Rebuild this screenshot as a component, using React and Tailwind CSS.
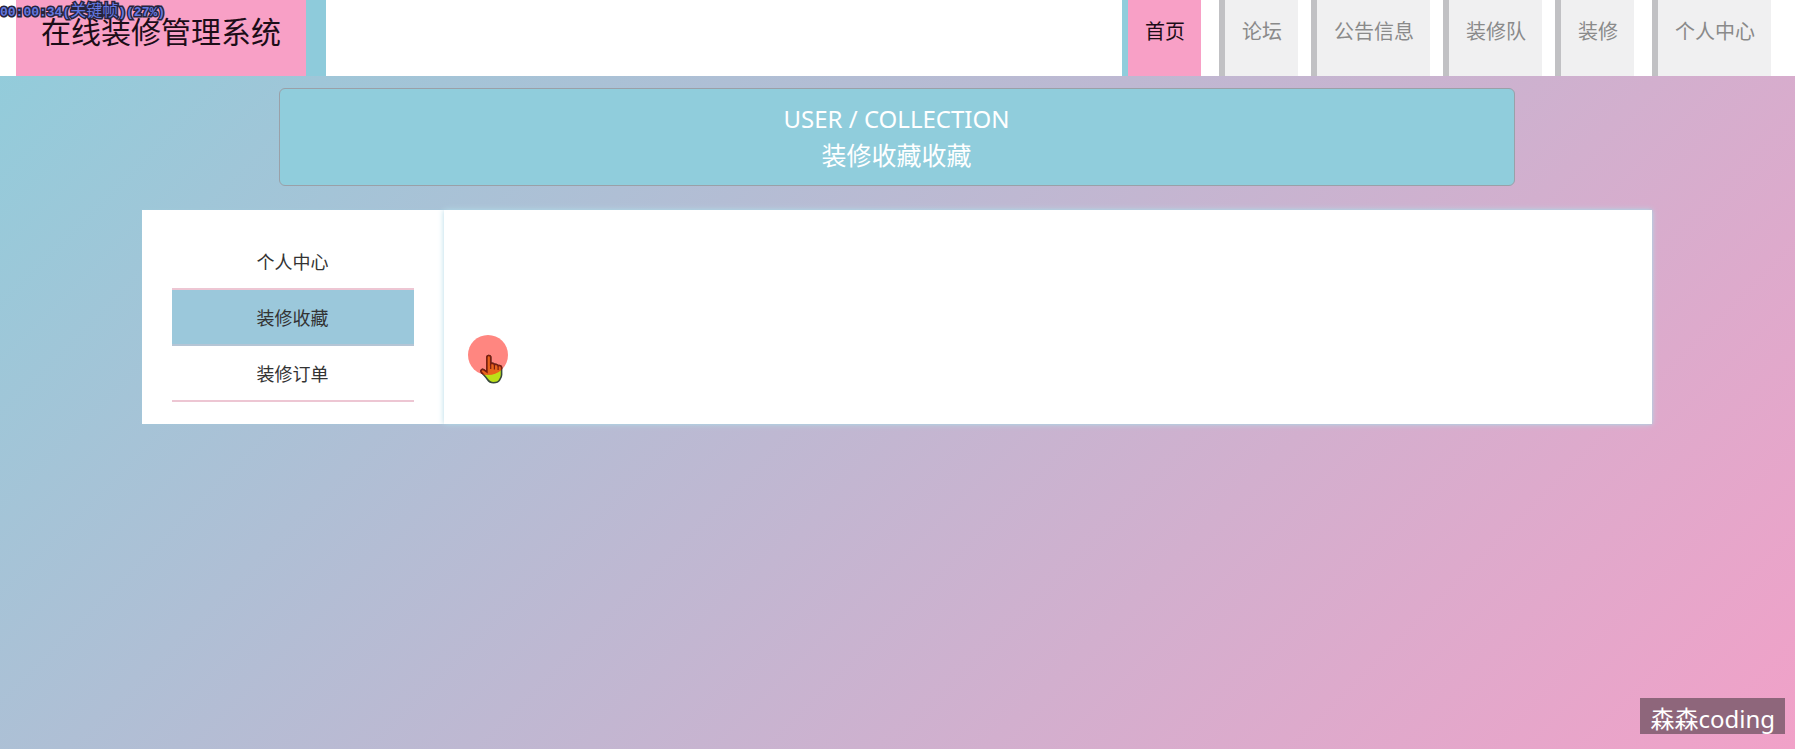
const links = [
  { label: '论坛', href: '#forum' },
  { label: '公告信息', href: '#notice' },
  { label: '装修队', href: '#team' },
  { label: '装修', href: '#decoration' },
];

const menu = [
  { label: '个人中心', href: '#center' },
  { label: '装修收藏', href: '#collection', active: true },
  { label: '装修订单', href: '#order' },
];

function NavLink({ label, href, active }) {
  const tone = active
    ? 'border-[#90cddc] bg-[#f8a0c6] text-[#1c0d18]'
    : 'border-[#c1c1c4] bg-[#f0f0f1] text-[#8a8a8a]';
  return (
    <a
      href={href}
      className={`flex h-[76px] items-start border-l-6 pt-4 pr-4 pl-[17px] text-[20px] leading-8 whitespace-nowrap ${tone}`}
    >
      {label}
    </a>
  );
}

function Pointer() {
  return (
    <svg viewBox="0 0 44 52" className="absolute top-[125px] left-6 h-[52px] w-11" aria-hidden="true">
      <defs>
        <clipPath id="spot">
          <circle cx="20" cy="20" r="20" />
        </clipPath>
        <path
          id="hand"
          d="M20.800 20.500c1.300 0 1.900.9 1.900 2v6.200c.5-.6 3.200-.5 3.700.9 1-.5 3.200-.2 3.700 1.100 1.200-.4 3.500 0 3.500 2.100v7c0 2.500-1.500 4-2.100 5.400-1 1.800-3.200 2.600-6 2.600-3.300 0-4.900-1.500-6.200-3.500-2-3-4.900-5.300-6.100-7.500-.9-1.800 1-2.900 2.400-2.100l3.300 2.300V22.500c0-1.200.6-2 1.900-2z"
        />
      </defs>
      <circle cx="20" cy="20" r="20" fill="#ff8680" />
      <use href="#hand" fill="#bce018" stroke="#3a4a3c" strokeWidth="1.6" />
      <g clipPath="url(#spot)">
        <use href="#hand" fill="#e8641c" stroke="#7a1c10" strokeWidth="1.6" />
      </g>
      <path d="M22.700 29v5M26.400 30v4.500M30.100 31v4" stroke="#7a1c10" strokeWidth="1.2" fill="none" />
    </svg>
  );
}

export default function App() {
  return (
    <div className="relative min-h-screen bg-[linear-gradient(135deg,#90cddb_0%,#f1a1c8_100%)] font-['Noto_Sans','Noto_Sans_CJK_SC',sans-serif]">
      <header className="flex h-[76px] items-stretch justify-between bg-white pr-6 pl-4">
        <a
          href="#home"
          className="border-r-20 border-[#8ecbdb] bg-[#f8a0c6] px-[25px] pt-2 text-[30px] leading-[48px] whitespace-nowrap text-[#1c0d18]"
        >
          在线装修管理系统
        </a>
        <nav className="flex gap-[18px]">
          <NavLink label="首页" href="#home" active />
          <div className="flex gap-[13px]">
            {links.map((l) => (
              <NavLink key={l.href} {...l} />
            ))}
          </div>
          <NavLink label="个人中心" href="#center" />
        </nav>
      </header>

      <main className="pt-3 pr-[18px] pl-4">
        <section className="mx-auto flex w-full max-w-[1236px] flex-col items-center rounded-md border border-[#9aa0a8] bg-[#90cddc] py-3 text-white">
          <h2 className="text-[24px] leading-9">USER / COLLECTION</h2>
          <h1 className="text-[25px] leading-9">装修收藏收藏</h1>
        </section>

        <section className="mx-auto mt-6 flex w-full max-w-[1510px] bg-white shadow-[0_0_2px_#a3cbdc]">
          <aside className="w-1/5 px-[30px] pt-6 pb-[22px]">
            <ul>
              {menu.map((m) => (
                <li key={m.href}>
                  <a
                    href={m.href}
                    className={
                      m.active
                        ? 'block h-14 border-b-2 border-[#b5c5d5] bg-[#9bc8db] text-center text-[18px] leading-[56px] text-[#333]'
                        : 'block h-14 border-b-2 border-[#edc6d3] text-center text-[18px] leading-[56px] text-[#333]'
                    }
                  >
                    {m.label}
                  </a>
                </li>
              ))}
            </ul>
          </aside>
          <div className="relative flex-1 shadow-[0_0_6px_#b5dbe8]">
            <Pointer />
          </div>
        </section>
      </main>

      <div className="absolute top-0 left-0 font-['Liberation_Mono','Noto_Sans_CJK_SC',monospace] text-[13px] leading-6 font-bold whitespace-nowrap text-[#6478e0] [paint-order:stroke_fill] [-webkit-text-stroke:3px_#26243c]">
        00:00:34(<span className="text-[16px] font-normal">关键帧</span>)(27%)
      </div>
      <div className="absolute right-[10px] bottom-[15px] h-9 bg-[#8e667b] px-[10px] text-[24px] leading-[42px] whitespace-nowrap text-white">
        森森coding
      </div>
    </div>
  );
}
